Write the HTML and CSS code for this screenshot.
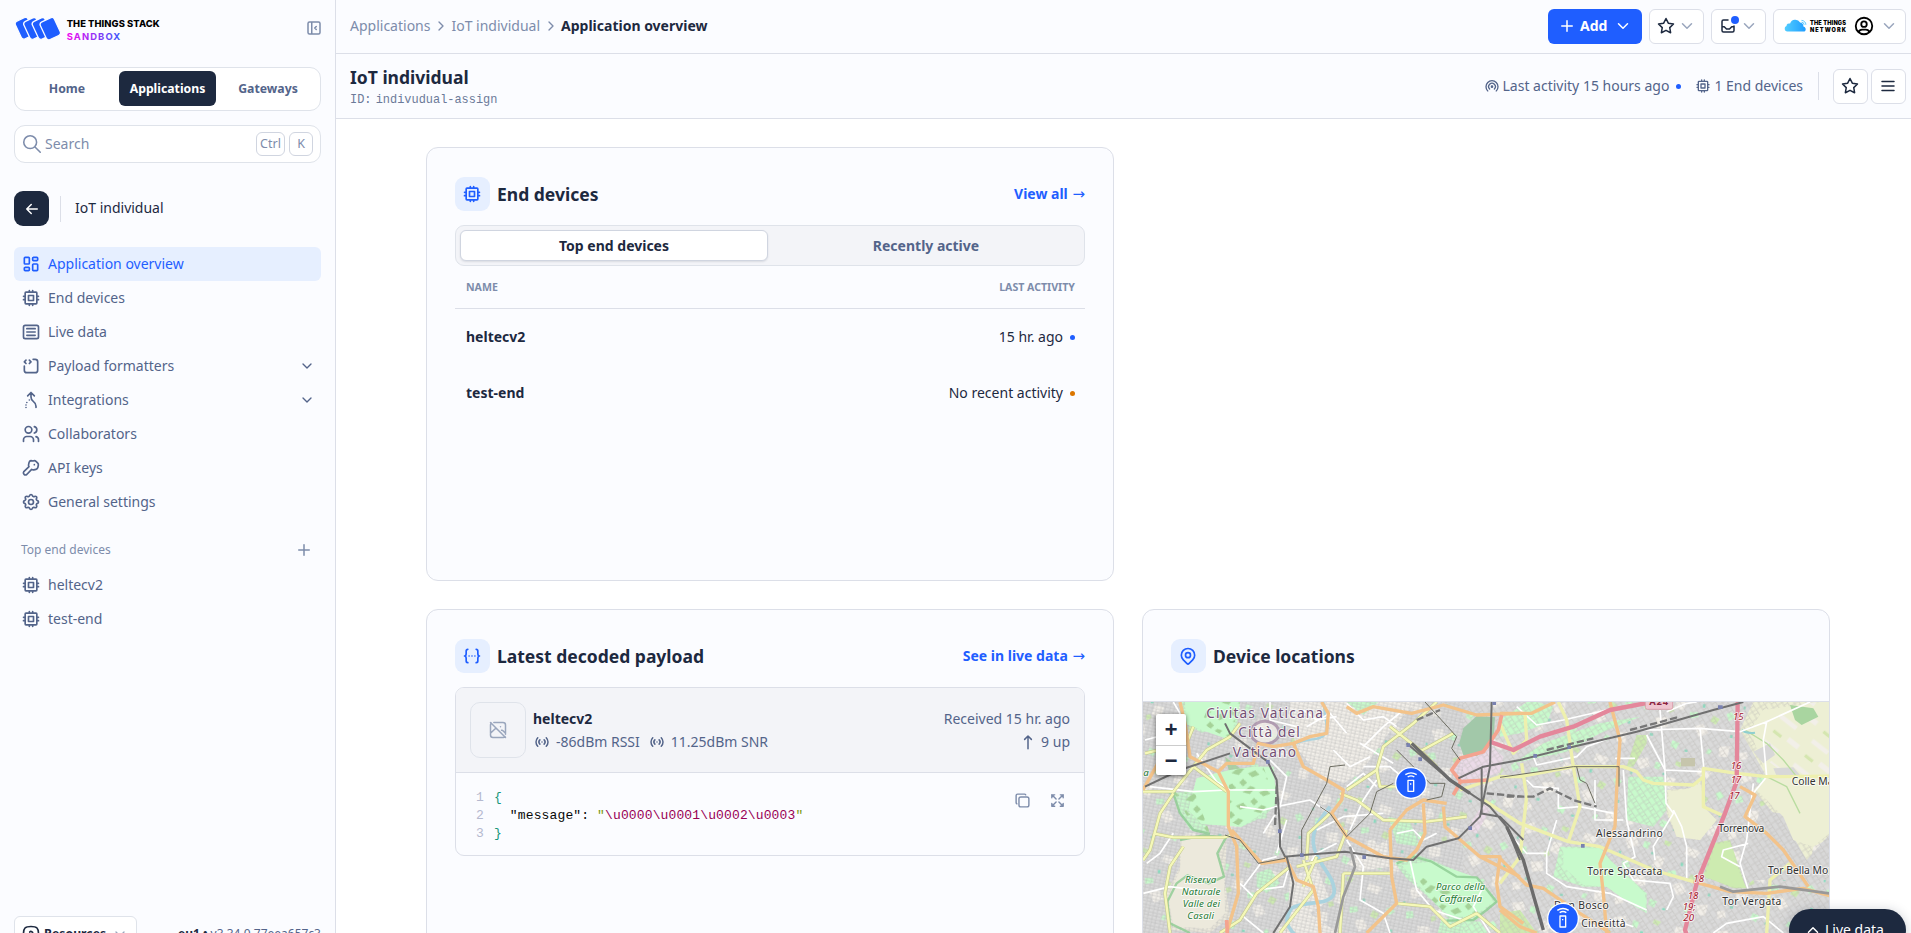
FILE: index.html
```html
<!DOCTYPE html>
<html lang="en">
<head>
<meta charset="utf-8">
<title>Application overview</title>
<link rel="stylesheet" href="styles.css">
</head>
<body>
<svg class="sprite" aria-hidden="true">
  <symbol id="chevron-down" viewBox="0 0 24 24"><path d="M6 9l6 6l6-6"/></symbol>
  <symbol id="chevron-up" viewBox="0 0 24 24"><path d="M6 15l6-6l6 6"/></symbol>
  <symbol id="chevron-right" viewBox="0 0 24 24"><path d="M9 6l6 6l-6 6"/></symbol>
  <symbol id="plus" viewBox="0 0 24 24"><path d="M12 5v14M5 12h14"/></symbol>
  <symbol id="star" viewBox="0 0 24 24"><path d="M12 17.75l-6.172 3.245l1.179-6.873l-5-4.867l6.9-1l3.086-6.253l3.086 6.253l6.9 1l-5 4.867l1.179 6.873z"/></symbol>
  <symbol id="cpu" viewBox="0 0 24 24"><path d="M5 6a1 1 0 0 1 1-1h12a1 1 0 0 1 1 1v12a1 1 0 0 1-1 1h-12a1 1 0 0 1-1-1zM9 9h6v6h-6zM3 10h2M3 14h2M10 3v2M14 3v2M21 10h-2M21 14h-2M14 21v-2M10 21v-2"/></symbol>
  <symbol id="dashboard" viewBox="0 0 24 24"><path d="M5 4h4a1 1 0 0 1 1 1v6a1 1 0 0 1-1 1h-4a1 1 0 0 1-1-1v-6a1 1 0 0 1 1-1M5 16h4a1 1 0 0 1 1 1v2a1 1 0 0 1-1 1h-4a1 1 0 0 1-1-1v-2a1 1 0 0 1 1-1M15 12h4a1 1 0 0 1 1 1v6a1 1 0 0 1-1 1h-4a1 1 0 0 1-1-1v-6a1 1 0 0 1 1-1M15 4h4a1 1 0 0 1 1 1v2a1 1 0 0 1-1 1h-4a1 1 0 0 1-1-1v-2a1 1 0 0 1 1-1"/></symbol>
  <symbol id="article" viewBox="0 0 24 24"><path d="M3 6a2 2 0 0 1 2-2h14a2 2 0 0 1 2 2v12a2 2 0 0 1-2 2h-14a2 2 0 0 1-2-2zM7 8h10M7 12h10M7 16h10"/></symbol>
  <symbol id="source-code" viewBox="0 0 24 24"><path d="M14.5 4h2.5a3 3 0 0 1 3 3v10a3 3 0 0 1-3 3h-10a3 3 0 0 1-3-3v-5M6 5l-2 2l2 2M10 9l2-2l-2-2"/></symbol>
  <symbol id="merge" viewBox="0 0 24 24"><path d="M8 7l4-4l4 4M12 3v5.394a6.737 6.737 0 0 0 3 5.606a6.737 6.737 0 0 1 3 5.606v1.394M6 21v-.01M6 18.01v-.01M7 15.02v-.01M10 12.03v-.01"/></symbol>
  <symbol id="users" viewBox="0 0 24 24"><path d="M5 7a4 4 0 1 0 8 0a4 4 0 1 0-8 0M3 21v-2a4 4 0 0 1 4-4h4a4 4 0 0 1 4 4v2M16 3.13a4 4 0 0 1 0 7.75M21 21v-2a4 4 0 0 0-3-3.85"/></symbol>
  <symbol id="key" viewBox="0 0 24 24"><path d="M14.5 3.6l.9-.3a3 3 0 0 1 2.600.7l2.100 2.100a3 3 0 0 1 .7 2.600l-.6 2.700a3 3 0 0 1-2.200 2.200l-2.700.6a3 3 0 0 1-2.500-.6l-5.900 6.200a2.500 2.500 0 0 1-3.500-3.500l6.200-5.900a3 3 0 0 1-.5-2.500l.6-2.600a3 3 0 0 1 2.200-2.200zM16 8h.01"/></symbol>
  <symbol id="settings" viewBox="0 0 24 24"><path d="M10.325 4.317c.426-1.756 2.924-1.756 3.350 0a1.724 1.724 0 0 0 2.573 1.066c1.543-.94 3.310.826 2.370 2.370a1.724 1.724 0 0 0 1.065 2.572c1.756.426 1.756 2.924 0 3.350a1.724 1.724 0 0 0-1.066 2.573c.94 1.543-.826 3.310-2.370 2.370a1.724 1.724 0 0 0-2.572 1.065c-.426 1.756-2.924 1.756-3.350 0a1.724 1.724 0 0 0-2.573-1.066c-1.543.94-3.310-.826-2.370-2.370a1.724 1.724 0 0 0-1.065-2.572c-1.756-.426-1.756-2.924 0-3.350a1.724 1.724 0 0 0 1.066-2.573c-.94-1.543.826-3.310 2.370-2.370c1 .608 2.296.07 2.572-1.065zM9 12a3 3 0 1 0 6 0a3 3 0 0 0-6 0"/></symbol>
  <symbol id="collapse" viewBox="0 0 24 24"><path d="M4 6a2 2 0 0 1 2-2h12a2 2 0 0 1 2 2v12a2 2 0 0 1-2 2h-12a2 2 0 0 1-2-2zM9 4v16M15 10l-2 2l2 2"/></symbol>
  <symbol id="search" viewBox="0 0 24 24"><path d="M3 10a7 7 0 1 0 14 0a7 7 0 1 0-14 0M21 21l-6-6"/></symbol>
  <symbol id="arrow-left" viewBox="0 0 24 24"><path d="M5 12h14M5 12l6 6M5 12l6-6"/></symbol>
  <symbol id="broadcast" viewBox="0 0 24 24"><path d="M18.364 19.364a9 9 0 1 0-12.728 0M15.536 16.536a5 5 0 1 0-7.072 0M11 13a1 1 0 1 0 2 0a1 1 0 1 0-2 0"/></symbol>
  <symbol id="inbox" viewBox="0 0 24 24"><path d="M12 4h-6a2 2 0 0 0-2 2v12a2 2 0 0 0 2 2h12a2 2 0 0 0 2-2v-6M4 13h3l3 3h4l3-3h3"/></symbol>
  <symbol id="user-circle" viewBox="0 0 24 24"><path d="M3 12a9 9 0 1 0 18 0a9 9 0 1 0-18 0M9 10a3 3 0 1 0 6 0a3 3 0 1 0-6 0M6.168 18.849a4 4 0 0 1 3.832-2.849h4a4 4 0 0 1 3.834 2.855"/></symbol>
  <symbol id="menu" viewBox="0 0 24 24"><path d="M4 6h16M4 12h16M4 18h16"/></symbol>
  <symbol id="json" viewBox="0 0 24 24"><path d="M7 4a2 2 0 0 0-2 2v3a2 3 0 0 1-2 3a2 3 0 0 1 2 3v3a2 2 0 0 0 2 2M17 4a2 2 0 0 1 2 2v3a2 3 0 0 0 2 3a2 3 0 0 0-2 3v3a2 2 0 0 1-2 2M8.500 12h.01M12 12h.01M15.500 12h.01"/></symbol>
  <symbol id="pin" viewBox="0 0 24 24"><path d="M9 11a3 3 0 1 0 6 0a3 3 0 0 0-6 0M17.657 16.657l-4.243 4.243a2 2 0 0 1-2.827 0l-4.244-4.243a8 8 0 1 1 11.314 0z"/></symbol>
  <symbol id="photo-off" viewBox="0 0 24 24"><path d="M15 8h.01M7 3h11a3 3 0 0 1 3 3v11M20.500 20a3 3 0 0 1-2.500 1h-12a3 3 0 0 1-3-3v-12c0-.9.4-1.700 1-2.200M3 16l5-5c.928-.893 2.072-.893 3 0l5 5M16.300 12.300c.6-.2 1.200 0 1.700.7l3 3M3 3l18 18"/></symbol>
  <symbol id="signal" viewBox="0 0 24 24"><path d="M12 12v.01M14.828 9.172a4 4 0 0 1 0 5.656M17.657 6.343a8 8 0 0 1 0 11.314M9.168 14.828a4 4 0 0 1 0-5.656M6.337 17.657a8 8 0 0 1 0-11.314"/></symbol>
  <symbol id="arrow-up" viewBox="0 0 24 24"><path d="M12 4v17M7.500 8.500l4.500-4.500l4.500 4.500"/></symbol>
  <symbol id="copy" viewBox="0 0 24 24"><path d="M7 9.667a2.667 2.667 0 0 1 2.667-2.667h8.666a2.667 2.667 0 0 1 2.667 2.667v8.666a2.667 2.667 0 0 1-2.667 2.667h-8.666a2.667 2.667 0 0 1-2.667-2.667zM4.012 16.737a2 2 0 0 1-1.012-1.737v-10c0-1.100.9-2 2-2h10c.75 0 1.158.385 1.500 1"/></symbol>
  <symbol id="maximize" viewBox="0 0 24 24"><path d="M16 4h4v4M14 10l6-6M8 20h-4v-4M4 20l6-6M16 20h4v-4M14 14l6 6M8 4h-4v4M4 4l6 6"/></symbol>
  <symbol id="help" viewBox="0 0 24 24"><path d="M12 3c7.200 0 9 1.800 9 9s-1.800 9-9 9s-9-1.800-9-9s1.800-9 9-9zM12 16v.01M12 13a2 2 0 0 0 .9-3.800a2 2 0 0 0-2.400.5"/></symbol>
</svg>

<div class="app">
  <aside class="sidebar">
    <div class="brand">
      <svg class="brand-logo" width="150" height="26" viewBox="0 0 150 26">
        <defs><linearGradient id="sandbox" x1="0" x2="1"><stop offset="0" stop-color="#f507f0"/><stop offset="1" stop-color="#3a57fb"/></linearGradient></defs>
        <g fill="#1f5eff" stroke="#fbfcff" stroke-width="1.300">
          <rect x="3.700" y="3.800" width="14" height="19.500" rx="3" transform="rotate(-25 10 13.500)"/>
          <rect x="12.200" y="3.800" width="14" height="19.500" rx="3" transform="rotate(-25 19 13.500)"/>
          <rect x="20.700" y="3.800" width="14" height="19.500" rx="3" transform="rotate(-25 27.500 13.500)"/>
          <rect x="28.500" y="3.800" width="15.500" height="19.500" rx="3" transform="rotate(-25 36.500 13.500)"/>
        </g>
        <text class="logo-text" x="52.700" y="12.200" textLength="93">THE THINGS STACK</text>
        <text class="logo-text logo-sub" x="52.700" y="24.500" textLength="53.500" fill="url(#sandbox)">SANDBOX</text>
      </svg>
      <svg class="icon icon-18 muted"><use href="#collapse"/></svg>
    </div>
    <div class="switcher">
      <a class="switch switch-first">Home</a><a class="switch switch-active">Applications</a><a class="switch switch-last">Gateways</a>
    </div>
    <div class="search">
      <svg class="icon icon-22"><use href="#search"/></svg>
      <span class="search-label">Search</span>
      <kbd class="kbd kbd-wide">Ctrl</kbd><kbd class="kbd">K</kbd>
    </div>
    <div class="context">
      <a class="back"><svg class="icon icon-18"><use href="#arrow-left"/></svg></a>
      <span class="context-name">IoT individual</span>
    </div>
    <nav class="nav">
      <a class="nav-item nav-active"><svg class="icon icon-20"><use href="#dashboard"/></svg>Application overview</a>
      <a class="nav-item"><svg class="icon icon-20"><use href="#cpu"/></svg>End devices</a>
      <a class="nav-item"><svg class="icon icon-20"><use href="#article"/></svg>Live data</a>
      <a class="nav-item"><svg class="icon icon-20"><use href="#source-code"/></svg>Payload formatters<svg class="icon icon-16 nav-chevron"><use href="#chevron-down"/></svg></a>
      <a class="nav-item"><svg class="icon icon-20"><use href="#merge"/></svg>Integrations<svg class="icon icon-16 nav-chevron"><use href="#chevron-down"/></svg></a>
      <a class="nav-item"><svg class="icon icon-20"><use href="#users"/></svg>Collaborators</a>
      <a class="nav-item"><svg class="icon icon-20"><use href="#key"/></svg>API keys</a>
      <a class="nav-item"><svg class="icon icon-20"><use href="#settings"/></svg>General settings</a>
    </nav>
    <div class="nav-heading"><span>Top end devices</span><svg class="icon icon-18"><use href="#plus"/></svg></div>
    <nav class="nav">
      <a class="nav-item"><svg class="icon icon-20"><use href="#cpu"/></svg>heltecv2</a>
      <a class="nav-item"><svg class="icon icon-20"><use href="#cpu"/></svg>test-end</a>
    </nav>
    <div class="side-footer">
      <a class="resources"><svg class="icon icon-20"><use href="#help"/></svg>Resources<svg class="icon icon-16 faint"><use href="#chevron-down"/></svg></a>
      <span class="version"><b>eu1 •</b> v3.34.0.77eea657c3</span>
    </div>
  </aside>

  <div class="page">
    <header class="topbar">
      <div class="crumbs">
        <span>Applications</span><svg class="icon icon-16"><use href="#chevron-right"/></svg><span>IoT individual</span><svg class="icon icon-16"><use href="#chevron-right"/></svg><b>Application overview</b>
      </div>
      <div class="actions">
        <a class="btn btn-primary"><svg class="icon icon-18"><use href="#plus"/></svg>Add<svg class="icon icon-18 add-chevron"><use href="#chevron-down"/></svg></a>
        <a class="btn btn-split"><svg class="icon icon-18"><use href="#star"/></svg><svg class="icon icon-18 faint"><use href="#chevron-down"/></svg></a>
        <a class="btn btn-split inbox"><svg class="icon icon-18"><use href="#inbox"/></svg><svg class="icon icon-18 faint"><use href="#chevron-down"/></svg><i class="badge"></i></a>
        <a class="btn btn-user">
          <svg width="64" height="14" viewBox="0 0 64 14">
            <defs><linearGradient id="cloud" x1="0" x2="1"><stop offset="0" stop-color="#52cdff"/><stop offset="1" stop-color="#1f9dff"/></linearGradient></defs>
            <path fill="url(#cloud)" d="M3 12.500a2.800 2.800 0 0 1-.5-5.400a2.600 2.600 0 0 1 3.600-2.500a5.500 5.500 0 0 1 10-1a4 4 0 0 1 3.300 4a2.700 2.700 0 0 1 1.200 4.900z"/>
            <path class="cloud-waves" d="M17.500 3.200a2.600 2.600 0 0 1 2.600 2.600M17.500 1.400a4.400 4.400 0 0 1 4.400 4.400"/>
            <text class="network-text" x="26" y="6.200" textLength="36">THE THINGS</text>
            <text class="network-text" x="26" y="12.700" textLength="36">NETWORK</text>
          </svg>
          <svg class="icon icon-22 user"><use href="#user-circle"/></svg>
          <svg class="icon icon-18 faint"><use href="#chevron-down"/></svg>
        </a>
      </div>
    </header>

    <section class="titlebar">
      <div class="title-block">
        <h1 class="title">IoT individual</h1>
        <p class="ident">ID: <span class="ident-value">indivudual-assign</span></p>
      </div>
      <div class="stats">
        <svg class="icon icon-16"><use href="#broadcast"/></svg><span>Last activity 15 hours ago</span><i class="dot dot-blue"></i>
        <svg class="icon icon-16 stat-cpu"><use href="#cpu"/></svg><span>1 End devices</span>
        <span class="rule"></span>
        <a class="btn btn-square"><svg class="icon icon-18"><use href="#star"/></svg></a>
        <a class="btn btn-square"><svg class="icon icon-18"><use href="#menu"/></svg></a>
      </div>
    </section>

    <main class="grid">
      <section class="card card-devices">
        <div class="card-head">
          <span class="tile"><svg class="icon icon-20"><use href="#cpu"/></svg></span>
          <h2 class="card-title">End devices</h2>
          <a class="card-link">View all <span class="arrow">→</span></a>
        </div>
        <div class="tabs"><a class="tab tab-active">Top end devices</a><a class="tab tab-idle">Recently active</a></div>
        <div class="thead"><span>NAME</span><span>LAST ACTIVITY</span></div>
        <div class="trow"><b>heltecv2</b><span class="when">15 hr. ago<i class="dot dot-blue"></i></span></div>
        <div class="trow"><b>test-end</b><span class="when">No recent activity<i class="dot dot-orange"></i></span></div>
      </section>

      <section class="card card-payload">
        <div class="card-head">
          <span class="tile"><svg class="icon icon-20"><use href="#json"/></svg></span>
          <h2 class="card-title">Latest decoded payload</h2>
          <a class="card-link">See in live data <span class="arrow">→</span></a>
        </div>
        <div class="payload">
          <div class="payload-head">
            <span class="thumb"><svg class="icon icon-20"><use href="#photo-off"/></svg></span>
            <div class="device">
              <b>heltecv2</b>
              <div class="radio"><svg class="icon icon-18"><use href="#signal"/></svg><span>-86dBm RSSI</span><svg class="icon icon-18"><use href="#signal"/></svg><span>11.25dBm SNR</span></div>
            </div>
            <div class="received"><span>Received 15 hr. ago</span><span class="up"><svg class="icon icon-18"><use href="#arrow-up"/></svg>9 up</span></div>
          </div>
          <div class="code">
            <div class="code-lines"><div class="line"><span class="num">1</span><span class="brace">{</span></div><div class="line"><span class="num">2</span>  "message": <span class="quote">"</span><span class="esc">\u0000\u0001\u0002\u0003</span><span class="quote">"</span></div><div class="line"><span class="num">3</span><span class="brace">}</span></div></div>
            <div class="code-tools"><svg class="icon icon-17"><use href="#copy"/></svg><svg class="icon icon-17"><use href="#maximize"/></svg></div>
          </div>
        </div>
      </section>

      <section class="card card-map">
        <div class="card-head">
          <span class="tile"><svg class="icon icon-20"><use href="#pin"/></svg></span>
          <h2 class="card-title">Device locations</h2>
        </div>
        <div class="map">
          <!-- Map units are thirds of a pixel -->
          <svg class="map-canvas" width="686" height="300" viewBox="39 306 2058 900" fill="none">
            <defs>
              <pattern id="streets" width="26" height="20" patternUnits="userSpaceOnUse" patternTransform="rotate(12)"><path d="M0 3h26M3 0v20M15 3v17M3 12h23" stroke="#b6b6b6" stroke-width="1.800" fill="none"/></pattern>
              <pattern id="streets2" width="30" height="24" patternUnits="userSpaceOnUse" patternTransform="rotate(-33)"><path d="M0 3h30M3 0v24M17 3v21M3 14h14" stroke="#bbb9b6" stroke-width="1.800" fill="none"/></pattern>
              <pattern id="specks" width="310" height="240" patternUnits="userSpaceOnUse" patternTransform="rotate(8)">
                <path fill="#f2efe9" d="M20 20l34-8 10 24-30 14zM120 60l26 4-6 34-28-8zM210 20l40 10-12 22-34-10zM60 130l36-6 4 28-32 8zM180 140l24-12 20 26-26 16zM262 190l32-6-4 34-26 0zM14 200l22-6 6 20-24 8z"/>
                <path fill="#c8facc" d="M80 20l18 4-6 20-16-6zM160 100l24-4 4 14-24 8zM20 90l20-4 6 18-22 8zM270 90l14-8 14 14-18 14zM120 190l22 6-8 20-18-8zM230 200l12 4-6 14-12-4z"/>
                <path fill="#88dcc0" d="M104 50h9v8h-9zM196 70h8v10h-8zM50 178h10v7h-10zM290 150h7v9h-7zM160 212h9v7h-9zM8 60h6v8h-6z"/>
                <path fill="#cdebb0" d="M140 10l22 4-8 14-16-6zM232 100l20 8-10 18-18-8zM94 96l14-6 6 12-14 8z"/>
              </pattern>
              <pattern id="leaves" width="80" height="66" patternUnits="userSpaceOnUse" patternTransform="rotate(-30)"><path fill="#a5d298" d="M4 8l30-4 10 12-24 8zM46 34l24 2 4 18-22-4zM10 44l16-4 4 16-16 4z"/></pattern>
              <pattern id="fields" width="120" height="90" patternUnits="userSpaceOnUse" patternTransform="rotate(38)"><path fill="#f2efe9" d="M10 10h60v14h-60zM70 50h40v16h-40z"/><path fill="#d5e6b0" d="M20 60h30v10h-30z"/></pattern>
            </defs>
            <rect x="39" y="306" width="2058" height="900" fill="#dadada"/>
            <rect x="39" y="306" width="2058" height="900" fill="url(#specks)"/>

            <!-- land use, west -->
            <path class="built" d="M480 306H860L790 380L740 450L690 520L640 550L560 520L505 450L480 380Z"/>
            <path class="built" d="M480 830L560 800L600 900L540 940L640 1010H470Z"/>
            <path class="park" d="M150 306H330L322 370L300 420L262 385L215 398L168 372Z"/>
            <path class="park" d="M200 535L300 510L372 500L430 500L440 612L400 650L335 680L215 672L175 630Z"/>
            <path class="wood" d="M285 470L330 505L400 500L440 560L420 620L350 665L300 640L310 560Z"/>
            <path class="park" d="M130 580L190 570L205 640L240 700L180 690L150 640Z"/>
            <path class="rural" d="M150 715L225 705L290 715L285 850L300 950L240 999L120 990L108 880L150 800Z"/>
            <path class="park" d="M650 306L745 306L700 345Z"/>
            <path class="park" d="M775 650L840 665L870 740L800 730Z"/>
            <path class="park" d="M795 790L850 760L905 780L985 815L1045 835L1105 905L1060 935L1040 960L960 960L900 895L830 835Z"/>
            <path class="park" d="M935 955L1050 965L1080 1010H920Z"/>
            <path class="park" d="M380 820L420 805L450 850L410 880L380 860Z"/>
            <path class="built" d="M650 790L770 720L780 800L690 812Z"/>
            <path class="pink" d="M975 485L1075 430L1120 470L1110 520L1000 545L970 520Z"/>
            <path class="pink" d="M1040 640L1065 610L1080 630L1040 700L1010 690Z"/>

            <!-- land use, east -->
            <g transform="translate(1110 240)">
              <path class="park" d="M0 120L90 60L160 80L140 130L60 160L0 170Z"/>
              <path class="park" d="M130 190L300 130L420 110L300 160L200 215L40 250Z"/>
              <path class="park" d="M385 290L490 290L500 390L460 440L380 420Z"/>
              <path class="park" d="M180 500L300 500L330 540L440 640L440 700L390 670L320 620L250 620L160 590Z"/>
              <path class="grass" d="M410 165H440V190L400 260H380ZM0 700L60 690L110 759H0Z"/>
              <path class="grass" d="M640 490L690 480L720 570L740 625H700L640 600L610 590Z"/>
              <path class="farm" d="M720 150L760 66H1000V470L940 500L930 560L860 500L830 410L760 330L800 290Z"/>
              <path class="farm" d="M500 330L570 325L600 300L620 390L650 420L600 480L530 470L500 400Z"/>
              <path class="town" d="M780 395L850 400L880 470L920 540L1000 450V600H760L735 620L720 560L745 490Z"/>
            </g>
            <rect x="39" y="306" width="960" height="900" fill="url(#streets)" opacity=".8"/>
            <rect x="999" y="306" width="1098" height="900" fill="url(#streets2)" opacity=".75"/>

            <!-- parks and fields without streets -->
            <path class="park" d="M165 306H330L300 420L215 390L168 372ZM200 535L300 510L372 500L430 500L440 612L335 680L215 672L175 630ZM815 795L905 785L1045 835L1090 905L1030 950L960 950L900 895Z"/>
            <path d="M240 306H330L300 420L215 370ZM300 510L400 500L440 612L335 680L290 660ZM130 575L195 580L240 700L190 680ZM860 830L950 850L1045 935L960 950L900 895Z" fill="url(#leaves)"/>
            <path class="rural" d="M155 720L225 708L288 716L262 760L282 830L285 940L240 985L130 980L115 890L150 810Z"/>
            <path class="park-line" d="M150 720L220 706L288 712L262 760L282 830L236 850L172 826L140 850L112 905L120 970L180 999M800 790L850 770L905 785L980 830L1040 832L1100 905L1070 930L1030 960L950 962M130 580L150 640L190 690L240 702"/>
            <path class="cemetery" d="M1040 348L1095 352L1092 400L1075 445L1040 468L1000 466L988 430L1000 385Z"/>
            <ellipse class="vatican" cx="405" cy="398" rx="42" ry="34"/>
            <g transform="translate(1110 240)">
              <path class="park" d="M190 505L300 505L330 540L435 640L438 690L390 670L320 620L250 615L190 560Z"/>
              <path class="farm" d="M750 150L790 90L960 66H1000V450L940 500L880 480L850 410L770 330L800 290Z"/>
              <path class="farm" d="M505 335L570 325L600 310L620 390L650 420L600 480L530 470L505 400Z"/>
              <path class="grass" d="M645 495L690 485L715 570L738 622H705L640 600L615 590Z"/>
              <path d="M790 130L860 70L1000 66V290L860 285L800 240Z" fill="url(#fields)"/>
              <path class="town" d="M760 215L810 190L825 225L790 250ZM820 265L880 262L900 285L830 288Z"/>
              <path class="wood" d="M870 75L940 85L955 110L905 135L885 120Z"/>
              <rect x="543" y="234" width="42" height="25" fill="#c6c5ac"/>
              <path class="farm-line" d="M735 150L800 190L850 240L890 290M800 290L860 320L900 400"/>
              <path class="water" d="M725 150q15 12 40 8"/>
            </g>

            <!-- water -->
            <path class="river" d="M600 620C560 670 548 690 550 730C556 790 620 830 612 880C600 920 520 900 485 925C460 960 470 980 500 1010"/>
            <path class="river river-narrow" d="M500 430C540 410 590 430 590 380L580 306"/>

            <!-- local streets -->
            <g class="minor">
              <path d="M130 306L150 340L120 400L45 420M60 560L190 575L290 570L440 570M420 306V360L500 380M330 620L400 630L440 620L540 600L600 640M200 460L260 545L300 570M130 700L90 760L50 790M340 860L400 780L440 770M330 850L370 890L340 950L400 999"/>
              <path d="M650 310L700 360L760 350L800 380M700 440L760 380L820 330M690 430L790 490M700 500L780 500L850 560M560 690L640 650L760 640M650 720L700 800L690 900L760 940L780 999M480 790L460 860L380 870M800 700L850 690L880 720L920 700M470 660L440 760M420 480L470 530L450 620L400 700M740 540L700 600L660 690"/>
              <path d="M840 780L860 870L910 930L1000 960M1060 860L1030 920L1080 999M620 730L560 760L540 790M40 880L120 860L200 870M520 330L560 360L620 350M530 380L600 340L650 400M610 450L660 500L720 470M650 560L700 520L740 560"/>
            </g>
            <g class="minor" transform="translate(1110 240)">
              <path d="M50 80L110 135L190 120L320 90M100 230L110 255L230 230L260 200L340 170M80 300L100 320L175 325V385L240 380L340 400M285 300V420H370M45 480L80 520L140 520L170 420M140 520V580L200 620L330 640L440 690M370 270L380 420L405 530L370 550L400 600L510 610L520 650L500 690M405 235H345M440 165L495 270L498 370L520 400L460 500L465 540M520 390L545 440L560 500V600M480 90L495 270L610 275M430 150L600 145L720 155L800 125L930 66M600 145L612 270M500 95L560 70L590 66M760 310L740 480L720 550L745 630M745 490L670 510L665 530L720 560M800 125L790 180L800 290L760 340M640 759L680 730L790 710L850 759M260 740L340 720L400 740"/>
            </g>

            <!-- secondary roads -->
            <g class="secondary-case">
              <path id="sec-west" d="M39 575H130L190 500L230 450L300 410L330 370M190 500L250 545L290 575M130 580L90 640L60 750L39 780M70 700L130 712H280L310 705M160 740L120 800L105 880L120 999M45 460L170 430L190 380M480 800L380 880L330 960L270 999M520 780L550 870L480 960L450 999M560 770L520 860M640 820H780M640 820L630 999M500 800L620 770L650 690M630 580L680 600L760 660L890 665L1010 650M650 570L740 510L760 440L850 370L920 306M800 910L900 920L960 980L1040 940L1110 999M740 510L750 560L850 560M780 380L870 450L920 500M530 780L535 700L590 650L600 640M860 460L970 400"/>
              <path id="sec-east" transform="translate(1110 240)" d="M-120 330L0 290L60 290L220 260H370L410 275L430 300L460 310L580 315L610 290V265L710 280L800 290L1000 288M175 66L200 120L220 260L240 380L205 485M65 250L80 350L60 530L0 610M0 130L40 220L80 180L75 100M-50 360L60 430L205 485L300 500L380 535L460 570L580 605M610 290V380L665 405M870 550L810 600L800 759"/>
            </g>
            <g class="secondary"><use href="#sec-west"/><use href="#sec-east"/></g>
            <g class="secondary-fill">
              <path d="M39 575H130L190 500L230 450L300 410L330 370M190 500L250 545L290 575M130 580L90 640L60 750L39 780M70 700L130 712H280L310 705M160 740L120 800L105 880L120 999M45 460L170 430L190 380M480 800L380 880L330 960L270 999M520 780L550 870L480 960L450 999M560 770L520 860M640 820H780M640 820L630 999M500 800L620 770L650 690M630 580L680 600L760 660L890 665L1010 650M650 570L740 510L760 440L850 370L920 306M800 910L900 920L960 980L1040 940L1110 999M740 510L750 560L850 560M780 380L870 450L920 500M530 780L535 700L590 650L600 640M860 460L970 400"/>
            </g>

            <!-- primary roads -->
            <g class="primary-case">
              <path id="pri-west" d="M150 306L165 370L180 470L265 515L295 575V680L320 740L325 880L290 999M39 570L95 470M265 515L290 490L370 490L385 430L430 440L490 430L540 410L590 400L595 340L575 306M490 430L520 500L590 540L640 570L635 600L605 640L650 710L760 770L830 780L860 750L885 700L880 610M470 780L395 790L305 690M465 770L500 840L550 860L565 920L570 999M650 320L680 340L730 320L845 340L940 315L1040 345L1180 340M780 690L830 630L880 600L950 610M780 690L785 830L800 910L710 999M940 620L945 680L1050 770L1170 830M1050 770H1110L1100 850L1110 920L1180 970"/>
              <path id="pri-east" transform="translate(1110 240)" d="M0 100H95L165 66M330 66L360 180L350 330L345 440L300 550L310 640L320 759M0 535L80 615L130 625L240 700L330 759M720 320L765 345L735 410L800 460L850 510L925 620M580 605L690 635L800 640L910 625L1000 650M0 690L60 740L110 759"/>
            </g>
            <g class="primary"><use href="#pri-west"/><use href="#pri-east"/></g>
            <path class="trunk" d="M1115 345L1105 390L1060 455L990 475L965 510L992 545L970 585M992 545L1075 540M290 960L292 999"/>
            <path class="motorway" d="M1080 425L1150 450L1230 410L1330 380L1440 330L1545 310"/>
            <path class="motorway" d="M1823 306L1820 545L1785 640L1700 850L1665 990L1690 1060"/>

            <!-- railways -->
            <g class="rail">
              <path d="M45 560L150 510L300 460M285 370L300 400L413 485L440 540L450 690V740L465 770L520 765L645 755L780 775L850 780L890 740L985 715L1050 650L1080 500L1085 306M830 430L960 540L1080 620L1130 680L1170 780M1050 640L1110 650L1180 720M985 535L1060 500L1170 480L1310 445L1520 395L1750 330L1840 306M1055 500V640M470 770L490 850L480 920L430 999"/>
            </g>
            <g class="rail-thin">
              <path d="M645 495L600 500L590 550L515 690V770M570 620L600 640L650 710L720 640L740 575L790 550M285 705L330 720L385 790L465 775M885 306L980 410L965 445L990 480M800 450L900 550L945 550L935 590L890 600M1110 532L1330 500H1467V560M1340 500L1350 540L1370 550L1395 610"/>
            </g>
            <path class="rail-wide" d="M845 430L960 540L1020 580M1130 680L1180 780L1240 990"/>
            <path class="rail-dash" d="M440 560L435 680M1070 580L1180 590M860 360L930 330M1130 590L1210 590L1260 565L1330 600L1400 620M1250 450L1390 415M1500 390L1650 350"/>
            <path class="tunnel" d="M660 740L675 800L640 890L615 999M1770 860L1810 875L1950 860L2097 880"/>
            <path class="station" d="M408 480h11v11h-11zM444 688h11v11h-11zM510 760h11v11h-11zM697 766h11v11h-11zM829 430h11v11h-11zM865 472h11v11h-11zM1087 306h11v9h-11zM1015 679h11v11h-11zM1210 462h11v11h-11zM1312 436h11v11h-11zM1353 732h11v11h-11zM1764 316h14v11h-14z"/>

            <!-- labels -->
            <g class="label label-city">
              <text x="229" y="353" textLength="350">Civitas Vaticana</text><text x="325" y="411" textLength="184">Città del</text><text x="308" y="472" textLength="190">Vaticano</text>
            </g>
            <g class="label label-park">
              <text x="165" y="849" textLength="94">Riserva</text><text x="155" y="885" textLength="116">Naturale</text><text x="158" y="920" textLength="112">Valle dei</text><text x="172" y="956" textLength="80">Casali</text>
              <text x="918" y="871" textLength="147">Parco della</text><text x="927" y="906" textLength="129">Caffarella</text><text x="40" y="528">a</text>
            </g>
            <g class="label" transform="translate(1110 240)">
              <text x="288" y="471" textLength="200">Alessandrino</text><text x="262" y="585" textLength="225">Torre Spaccata</text><text x="162" y="686" textLength="164">Don Bosco</text><text x="244" y="742" textLength="133">Cinecittà</text><text x="655" y="455" textLength="138">Torrenova</text><text x="804" y="581">Tor Bella Monaca</text><text x="667" y="675" textLength="177">Tor Vergata</text><text x="875" y="316">Colle Mattia</text>
            </g>
            <g class="label label-exit" transform="translate(1110 240)">
              <text x="699" y="121">15</text><text x="692" y="267">16</text><text x="692" y="310">17</text><text x="687" y="356">17</text><text x="580" y="605">18</text><text x="563" y="657">18</text><text x="548" y="690">19;</text><text x="550" y="724">20</text>
            </g>
            <rect x="1546" y="290" width="82" height="38" rx="6" fill="#efc6d0" stroke="#d38a9c" stroke-width="2"/>
            <text class="shield" x="1558" y="315" textLength="56">A24</text>

            <!-- device markers -->
            <g id="marker">
              <circle cx="843" cy="549" r="48" fill="#fff"/><circle cx="843" cy="549" r="44" fill="#1f5eff"/>
              <path class="marker-lines" d="M834 541h17v33h-17zM842 550v4M833 531q10-7 20 0M826 524q17-11 34 0"/>
            </g>
            <use href="#marker" x="456" y="407"/>
          </svg>
          <div class="zoom"><a class="zoom-btn">+</a><a class="zoom-btn">−</a></div>
        </div>
      </section>
    </main>
  </div>
  <a class="live"><svg class="icon icon-18"><use href="#chevron-up"/></svg>Live data</a>
</div>
</body>
</html>
```
FILE: styles.css
```css
* { box-sizing: border-box; }
html, body { margin: 0; height: 100%; overflow: hidden; }
body { font: 14px/20px "Noto Sans", "Open Sans", sans-serif; color: #1d293f; background: #fff; }
h1, h2, p { margin: 0; }
b { font-weight: 700; }
.sprite { position: absolute; width: 0; height: 0; }
.icon { flex: none; fill: none; stroke: currentColor; stroke-width: 2; stroke-linecap: round; stroke-linejoin: round; }
.icon-16 { width: 16px; height: 16px; }
.icon-17 { width: 17px; height: 17px; }
.icon-18 { width: 18px; height: 18px; }
.icon-20 { width: 20px; height: 20px; }
.icon-22 { width: 22px; height: 22px; }
.muted { color: #7d8cab; }
.faint { color: #9aa6bd; }

.app { display: flex; height: 933px; overflow: hidden; position: relative; }

/* Sidebar */
.sidebar { flex: none; width: 336px; height: 952px; padding: 15px 14px 0; border-right: 1px solid #dcdfe8; background: #fbfcff; display: flex; flex-direction: column; }
.brand { display: flex; justify-content: space-between; align-items: center; height: 26px; padding-right: 1px; margin-bottom: 26px; }
.brand .icon { margin-right: -3px; }
.logo-text { font: 800 9.400px Inter, sans-serif; }
.logo-sub { font-weight: 700; }
.switcher { display: flex; height: 44px; padding: 3px; border: 1px solid #dfe3ea; border-radius: 11px; background: #fff; }
.switch { flex: 1; height: 35px; border-radius: 6px; display: flex; align-items: center; justify-content: center; font-size: 12.250px; font-weight: 700; color: #53648a; }
.switch-first { padding-right: 3px; }
.switch-last { padding-left: 3px; }
.switch-active { flex: 0 0 97px; background: #1d293f; color: #fff; }
.search { display: flex; align-items: center; height: 38px; margin-top: 14px; padding: 0 7px 0 6px; border: 1px solid #dfe3ea; border-radius: 11px; background: #fff; color: #7d8cab; }
.search .icon { stroke-width: 1.700; }
.search-label { flex: 1; padding-left: 2px; }
.kbd { height: 24px; width: 24px; border: 1px solid #d0d5e0; border-radius: 6px; font: 12.500px/21px "Noto Sans", sans-serif; text-align: center; margin-left: 4px; }
.kbd-wide { width: 29px; }
.context { display: flex; align-items: center; margin-top: 28px; height: 35px; }
.back { width: 35px; height: 35px; border-radius: 9px; background: #1d293f; color: #fff; display: flex; align-items: center; justify-content: center; }
.context-name { margin-left: 11px; border-left: 1px solid #dcdfe8; padding: 2px 0 4px 14px; line-height: 20px; }
.nav { display: flex; flex-direction: column; }
.context + .nav { margin-top: 21px; }
.nav-item { display: flex; align-items: center; height: 34px; padding: 0 6px 0 7px; gap: 7px; border-radius: 6px; color: #53648a; }
.nav-active { background: #e6efff; color: #1f5eff; }
.nav-chevron { margin-left: auto; }
.nav-heading { display: flex; align-items: center; justify-content: space-between; height: 24px; margin: 19px 8px 6px 7px; font-size: 12px; color: #7d8cab; }
.side-footer { display: flex; align-items: center; justify-content: space-between; margin-top: auto; height: 36px; }
.resources { display: flex; align-items: center; gap: 3px; width: 123px; height: 36px; padding: 0 8px 0 6px; border: 1px solid #dfe3ea; border-radius: 6px; background: #fff; font-size: 12.250px; font-weight: 700; }
.resources .faint { margin-left: auto; }
.version { font-size: 12px; color: #53648a; }
.version b { color: #1d293f; font-weight: 700; }

/* Top bars */
.page { flex: 1; min-width: 0; }
.topbar { display: flex; align-items: center; justify-content: space-between; height: 54px; padding: 0 5px 1px 14px; border-bottom: 1px solid #dcdfe8; background: #fbfcff; }
.crumbs { display: flex; align-items: center; color: #7d8cab; gap: 2.500px; margin-top: -1px; }
.crumbs b { color: #1d293f; }
.actions { display: flex; gap: 7px; }
.btn { display: flex; align-items: center; height: 35px; border: 1px solid #dcdfe8; border-radius: 6px; background: #fff; }
.btn-primary { width: 94px; padding-left: 10px; gap: 4px; border: 0; background: #1f5eff; color: #fff; font-weight: 700; }
.add-chevron { margin-left: 3px; }
.btn-split { width: 55px; padding-left: 7px; gap: 3px; position: relative; }
.badge { position: absolute; left: 19px; top: 6px; width: 8px; height: 8px; border-radius: 50%; background: #1f5eff; }
.btn-user { width: 133px; padding-left: 10px; }
.btn-user .user { margin: 0 5px; color: #000; }
.cloud-waves { fill: none; stroke: #4bc3ff; stroke-width: .9; }
.network-text { font: 900 5.600px Inter, sans-serif; }
.titlebar { display: flex; align-items: center; justify-content: space-between; height: 65px; padding: 0 5px 0 14px; border-bottom: 1px solid #dcdfe8; background: #fbfcff; }
.title { font-size: 17.500px; line-height: 24px; font-weight: 700; margin-top: 2px; }
.ident { font: 11.950px/18px "Liberation Mono", monospace; color: #6b7a99; margin-top: 2px; }
.ident-value { margin-left: -3px; }
.stats { display: flex; align-items: center; color: #53648a; gap: 3px; }
.dot { width: 5px; height: 5px; border-radius: 50%; flex: none; }
.dot-blue { background: #1f5eff; }
.dot-orange { background: #db7600; }
.stats .dot { margin: 0 11px 0 4px; }
.rule { width: 1px; height: 28px; background: #dcdfe8; margin: 0 11px 0 12px; }
.btn-square { width: 35px; padding-right: 1px; justify-content: center; color: #1d293f; }

/* Cards */
.grid { display: grid; grid-template-columns: 688px 688px; grid-template-rows: 434px 434px; gap: 28px; padding: 28px 0 0 90px; }
.card { border: 1px solid #dcdfe8; border-radius: 12px; background: #fbfcff; padding: 28px; overflow: hidden; }
.card-devices { grid-column: 1 / 2; }
.card-payload { grid-column: 1; grid-row: 2; }
.card-map { grid-column: 2; grid-row: 2; }
.card-head { display: flex; align-items: center; height: 35px; }
.tile { width: 35px; height: 34px; padding-right: 1px; border-radius: 9px; background: #e6efff; color: #1f5eff; display: flex; align-items: center; justify-content: center; margin-right: 7px; }
.card-title { font-size: 17.500px; line-height: 24px; font-weight: 700; flex: 1; }
.card-link { color: #1f5eff; font-weight: 700; }
.arrow { font: 15px/14px "DejaVu Sans", sans-serif; margin-left: 1px; }
.tabs { display: flex; height: 41px; margin-top: 14px; padding: 4px; border: 1px solid #dfe3ea; border-radius: 9px; background: #f3f4f8; }
.tab { flex: 1; display: flex; align-items: center; justify-content: center; font-weight: 700; color: #53648a; border-radius: 6px; }
.tab-idle { padding-left: 4px; }
.tab-active { flex: 0 0 308px; background: #fff; color: #1d293f; border: 1px solid #d0d5e0; box-shadow: 0 1px 2px rgba(29, 41, 63, .12); }
.thead { display: flex; justify-content: space-between; align-items: center; height: 43px; padding: 0 10px 1px 11px; border-bottom: 1px solid #dcdfe8; font-size: 10.600px; font-weight: 700; color: #7d8cab; }
.trow { display: flex; justify-content: space-between; align-items: center; height: 56px; padding: 0 10px 0 11px; }
.when { display: flex; align-items: center; gap: 7px; }

.payload { margin-top: 14px; border: 1px solid #dcdfe8; border-radius: 9px; overflow: hidden; height: 169px; }
.payload-head { display: flex; align-items: center; height: 85px; padding: 0 14px; background: #f3f4f8; border-bottom: 1px solid #dcdfe8; color: #53648a; }
.thumb { width: 56px; height: 56px; border: 1px solid #dfe3ea; border-radius: 10px; display: flex; align-items: center; justify-content: center; color: #9aa6bd; }
.thumb .icon { stroke-width: 1.800; }
.device { margin-left: 7px; flex: 1; }
.device b { display: block; color: #1d293f; line-height: 23px; }
.radio { display: flex; align-items: center; gap: 5px; line-height: 23px; }
.radio span + .icon { margin-left: 3px; }
.received { display: flex; flex-direction: column; align-items: flex-end; line-height: 23px; }
.up { display: flex; align-items: center; gap: 4px; }
.code { display: flex; justify-content: space-between; padding: 16px 18px 0 20px; }
.code-lines { font: 13px/18px "Liberation Mono", monospace; letter-spacing: .13px; color: #080808; white-space: pre; }
.line { display: flex; }
.num { width: 18px; color: #b5b9cf; }
.brace { color: #16967a; }
.quote { color: #7a9a12; }
.esc { color: #990055; }
.code-tools { display: flex; gap: 18px; padding-top: 3px; color: #7d8cab; }

/* Map */
.map { position: relative; margin: 28px -28px 0; border-top: 1px solid #dcdfe8; }
.map-canvas { display: block; stroke-linejoin: round; }
.built { fill: #f2efe9; }
.park { fill: #c8facc; }
.wood { fill: #a9d5a0; }
.rural { fill: #ece9dc; }
.grass { fill: #cdebb0; }
.farm { fill: #edefd4; }
.town { fill: #d8d8d8; }
.pink { fill: #ebdbe8; }
.cemetery { fill: #a2c8a9; }
.park-line { stroke: #8ccb91; stroke-width: 7; opacity: .8; }
.farm-line { stroke: #b9dca0; stroke-width: 4; }
.vatican { fill: #f2efe9; stroke: #a58aa6; stroke-width: 9; opacity: .75; }
.river { stroke: #aad3df; stroke-width: 11; }
.river-narrow { stroke-width: 7; }
.water { stroke: #8fcfcf; stroke-width: 6; }
.minor { stroke: #fff; stroke-width: 5; }
.secondary-case { stroke: #c3c98a; }
.secondary-case path { stroke-width: 10px; stroke: inherit; }
.secondary { display: none; }
.secondary-fill { stroke: #f5f8b8; stroke-width: 7; }
#sec-east { stroke: #eef0ae; }
.primary-case { stroke: #f3c38a; stroke-width: 10; }
.primary { display: none; }
.trunk { stroke: #f4a38f; stroke-width: 11; }
.motorway { stroke: #e4879b; stroke-width: 13; }
.rail { stroke: #707070; stroke-width: 6; }
.rail-thin { stroke: #6d6d62; stroke-width: 3; }
.rail-wide { stroke: #6b6b6b; stroke-width: 10; }
.rail-dash { stroke: #777; stroke-width: 7; stroke-dasharray: 22 9; }
.tunnel { stroke: #999; stroke-width: 8; }
.station { fill: #7981b0; }
.label { font: 31px "Noto Sans", sans-serif; fill: #333; paint-order: stroke; stroke: rgba(255, 255, 255, .7); stroke-width: 6px; }
.label-city { font-size: 41px; fill: #734f75; }
.label-park { font-size: 29px; font-style: italic; fill: #1f7a33; }
.label-exit { font-size: 29px; font-style: italic; fill: #a3142b; }
.shield { font: 700 28px "Noto Sans", sans-serif; fill: #8a2440; }
.marker-lines { stroke: #fff; stroke-width: 4; }
.zoom { position: absolute; left: 13px; top: 12px; width: 30px; background: #fff; border-radius: 2px; box-shadow: 0 1px 4px rgba(0, 0, 0, .55); }
.zoom-btn { display: block; height: 31px; font: bold 22px/35px "Liberation Mono", monospace; text-align: center; color: #1d293f; }
.zoom-btn + .zoom-btn { border-top: 1px solid #ccc; height: 30px; line-height: 33px; }

.live { position: absolute; right: 5px; top: 909px; width: 117px; height: 42px; border-radius: 21px; background: #1d293f; color: #fff; display: flex; align-items: center; gap: 3px; padding-left: 15px; font-size: 14px; box-shadow: 0 2px 12px rgba(29, 41, 63, .25); }
```
